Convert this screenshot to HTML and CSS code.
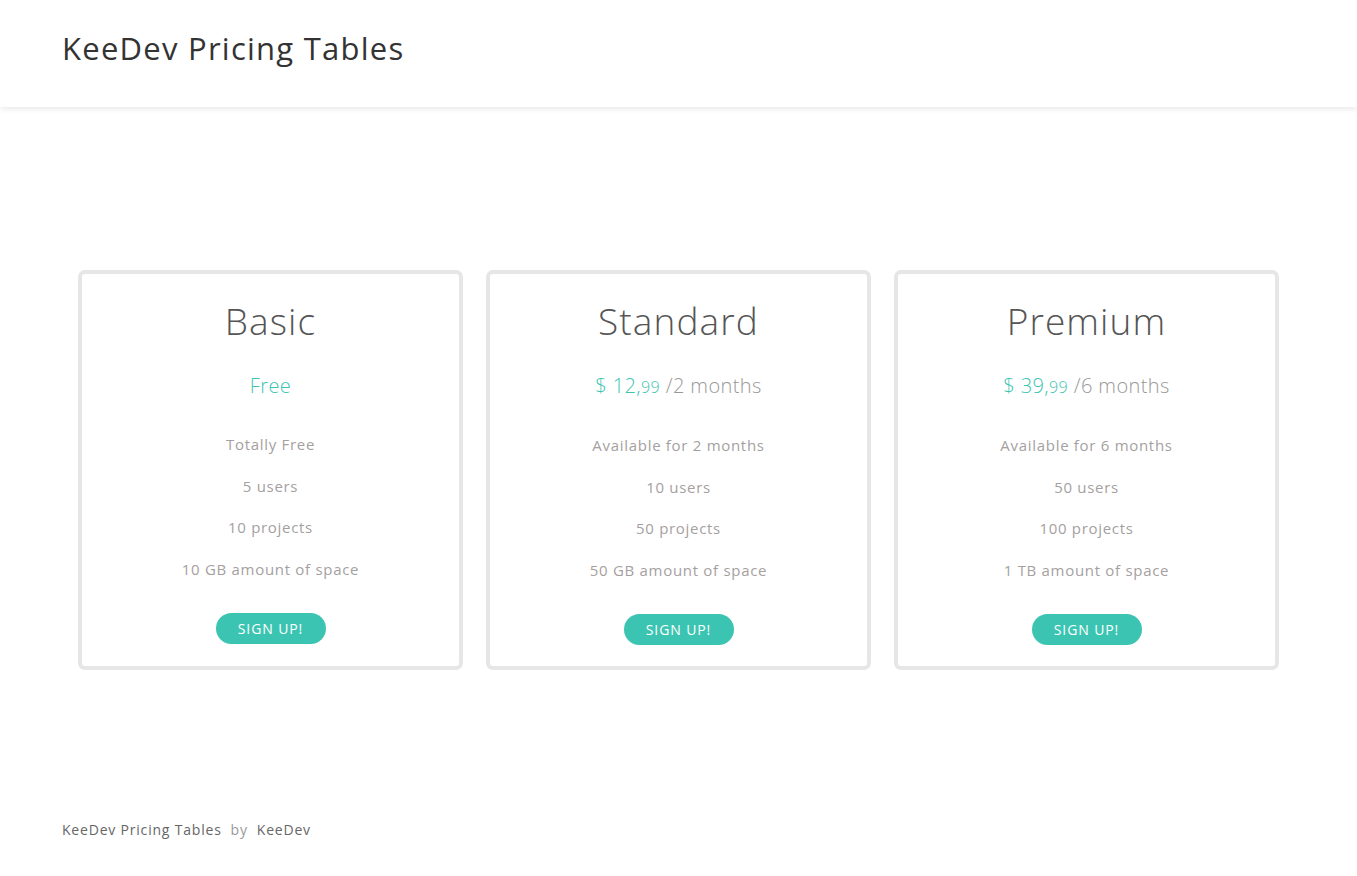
FILE: index.html
```html
<!DOCTYPE html>
<html lang="en">
<head>
<meta charset="utf-8">
<title>KeeDev Pricing Tables</title>
<link rel="stylesheet" href="styles.css">
</head>
<body>
<header class="site-header">
  <h1 class="site-title">KeeDev Pricing Tables</h1>
</header>
<main class="pricing">
  <div class="card">
    <h2 class="plan-name">Basic</h2>
    <div class="price"><span class="amount">Free</span></div>
    <ul class="features">
      <li>Totally Free</li>
      <li>5 users</li>
      <li>10 projects</li>
      <li>10 GB amount of space</li>
    </ul>
    <a class="btn" href="#">SIGN UP!</a>
  </div>
  <div class="card">
    <h2 class="plan-name">Standard</h2>
    <div class="price"><span class="amount">$ 12,<small>99</small></span> <span class="period">/2 months</span></div>
    <ul class="features">
      <li>Available for 2 months</li>
      <li>10 users</li>
      <li>50 projects</li>
      <li>50 GB amount of space</li>
    </ul>
    <a class="btn" href="#">SIGN UP!</a>
  </div>
  <div class="card">
    <h2 class="plan-name">Premium</h2>
    <div class="price"><span class="amount">$ 39,<small>99</small></span> <span class="period">/6 months</span></div>
    <ul class="features">
      <li>Available for 6 months</li>
      <li>50 users</li>
      <li>100 projects</li>
      <li>1 TB amount of space</li>
    </ul>
    <a class="btn" href="#">SIGN UP!</a>
  </div>
</main>
<footer class="site-footer">
  <span class="f-link">KeeDev Pricing Tables</span><span class="f-by">by</span><span class="f-link">KeeDev</span>
</footer>
</body>
</html>
```

FILE: styles.css
```css
* { box-sizing: border-box; }
html, body { margin: 0; padding: 0; background: #fff; }
body {
  font-family: "Open Sans", "Liberation Sans", sans-serif;
  color: #333;
}
.site-header {
  height: 107px;
  background: #fff;
  box-shadow: 0 2px 6px rgba(0,0,0,0.09);
  display: flex;
  align-items: center;
  padding: 0 62px;
  position: relative;
}
.site-title {
  margin: 0;
  font-size: 31px;
  font-weight: 400;
  color: #333;
  letter-spacing: 1.25px;
  padding-bottom: 11px;
}
.pricing {
  display: flex;
  justify-content: center;
  gap: 23px;
  padding-top: 163px;
}
.card {
  width: 385px;
  height: 400px;
  border: 4px solid #e6e6e6;
  border-radius: 7px;
  display: flex;
  flex-direction: column;
  align-items: center;
  padding-top: 26px;
}
.plan-name {
  margin: 0;
  font-size: 37px;
  font-weight: 300;
  color: #555;
  line-height: 42px;
  letter-spacing: 1.1px;
}
.price {
  margin-top: 31px;
  font-size: 20px;
  line-height: 26px;
  font-weight: 300;
  color: #999;
  letter-spacing: 0.4px;
}
.amount { color: #3cc4b1; }
.amount small { font-size: 16px; }
.features {
  list-style: none;
  margin: 35px 0 0;
  padding: 0;
  text-align: center;
}
.features li {
  font-size: 15px;
  line-height: 20px;
  color: #a59f9f;
  margin-bottom: 21.5px;
  letter-spacing: 0.7px;
}
.btn {
  margin-top: 13px;
  display: inline-flex;
  align-items: center;
  justify-content: center;
  width: 110px;
  height: 31px;
  border-radius: 16px;
  background: #3cc4b2;
  color: #fff;
  text-decoration: none;
  font-size: 14px;
  letter-spacing: 0.9px;
}
.site-footer {
  padding: 150px 62px 0;
  font-size: 14px;
  line-height: 20px;
  letter-spacing: 0.8px;
}
.f-link { color: #666; }
.f-by { color: #999; margin: 0 9px; }
```
